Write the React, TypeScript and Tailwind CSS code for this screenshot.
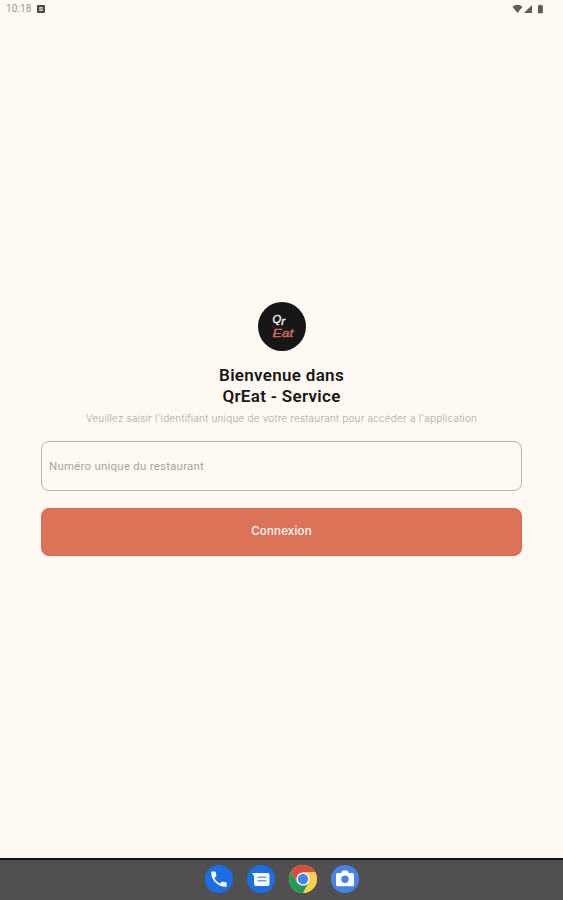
const StatusBar = () => (
  <header className="flex h-[18px] shrink-0 items-center justify-between pl-[6px] pr-[18px]">
    <div className="flex items-center gap-[6px]">
      <span className="font-['Roboto',sans-serif] text-[10px] leading-none tracking-[0.1px] text-[#9b9793]">10:18</span>
      <svg width="8" height="8" viewBox="0 0 8 8">
        <rect width="8" height="8" rx="1" fill="#4b4845" />
        <path d="M2.3 2h3.4v4H2.3z" fill="#d8d3cd" />
        <path d="M3.5 3.2h1.2v1.4H3.5z" fill="#4b4845" />
      </svg>
    </div>
    <svg width="33" height="10" viewBox="0 0 33 10" fill="#5f5c59">
      <path d="M0.5 2.7Q5.5-1 10.5 2.7L5.5 9z" />
      <path d="M12 9 20 1v8z" />
      <path d="M26 1.5h1.3V.7h2.2v.8h1.4V9.3H26z" />
    </svg>
  </header>
);

const Logo = () => (
  <svg width="48" height="49" viewBox="0 0 48 49" className="shrink-0">
    <ellipse cx="24" cy="24.5" rx="24" ry="24.5" fill="#171717" />
    <g fontFamily="Liberation Sans, sans-serif" fontStyle="italic" fontSize="11.5" strokeWidth="0.4">
      <text x="14.5" y="21" fill="#f3f3f3" stroke="#f3f3f3" textLength="12.5" lengthAdjust="spacingAndGlyphs">
        Q<tspan dy="1.5">r</tspan>
      </text>
      <text x="14.5" y="35" fill="#d96a4e" stroke="#d96a4e" textLength="21" lengthAdjust="spacingAndGlyphs">
        Eat
      </text>
    </g>
  </svg>
);

const PhoneIcon = () => (
  <svg width="28" height="28" viewBox="0 0 28 28">
    <circle cx="14" cy="14" r="14" fill="#1a6fe8" />
    <path
      transform="translate(3.6 3.8) scale(.86)"
      fill="#fff"
      d="M6.62 10.79a15.15 15.15 0 0 0 6.59 6.59l2.2-2.2a1 1 0 0 1 1.02-.24 11.4 11.4 0 0 0 3.57.57 1 1 0 0 1 1 1V20a1 1 0 0 1-1 1A17 17 0 0 1 3 4a1 1 0 0 1 1-1h3.5a1 1 0 0 1 1 1c0 1.25.2 2.45.57 3.57a1 1 0 0 1-.25 1.02z"
    />
  </svg>
);

const MessagesIcon = () => (
  <svg width="28" height="28" viewBox="0 0 28 28">
    <circle cx="14" cy="14" r="14" fill="#1a6fe8" />
    <path d="M5 8h15.5a2 2 0 0 1 2 2v9a2 2 0 0 1-2 2H9a2 2 0 0 1-2-2v-8z" fill="#fff" />
    <path d="M10.5 12.3h9M10.5 15.8h9" stroke="#6b9ff0" strokeWidth="1.4" />
  </svg>
);

const ChromeIcon = () => (
  <svg width="28" height="28" viewBox="0 0 28 28">
    <circle cx="14" cy="14" r="14" fill="#fbd04b" />
    <path d="M14 14 8.2 17.3 1.9 7A14 14 0 0 1 26.1 7H14z" fill="#dd4b3e" />
    <path d="M1.9 7 8 17.5 14 20.5 19.6 17.6 14 28A14 14 0 0 1 1.9 7z" fill="#1e9a58" />
    <path d="M14 7h12.1A14 14 0 0 1 14 28l6-10.5z" fill="#fbd04b" />
    <circle cx="14" cy="14" r="6.6" fill="#fff" />
    <circle cx="14" cy="14" r="5.2" fill="#4285f4" />
  </svg>
);

const CameraIcon = () => (
  <svg width="28" height="28" viewBox="0 0 28 28">
    <circle cx="14" cy="14" r="14" fill="#4683e8" />
    <path
      d="M6.5 8h3.6l1.5-2.4h4.8L17.9 8h3.6A1.5 1.5 0 0 1 23 9.5v10.2a1.5 1.5 0 0 1-1.5 1.5h-15A1.5 1.5 0 0 1 5 19.7V9.5A1.5 1.5 0 0 1 6.5 8z"
      fill="#fff"
    />
    <circle cx="14" cy="14.3" r="3.7" fill="#4683e8" />
  </svg>
);

export default function App() {
  return (
    <div className="flex h-[900px] w-full flex-col bg-[#fff9f3]">
      <StatusBar />

      <main className="flex flex-1 flex-col items-center px-[41px] pt-[284px]">
        <Logo />
        <h1 className="mt-[14px] text-center font-['Roboto',sans-serif] text-[17px] font-semibold leading-[21px] tracking-[0.3px] text-[#171615]">
          Bienvenue dans
          <br />
          QrEat - Service
        </h1>
        <p className="mt-[3px] whitespace-nowrap font-['Inter',sans-serif] text-[10px] font-light leading-[17px] tracking-[0.21px] text-[#a9a49f]">
          Veuillez saisir l'identifiant unique de votre restaurant pour accèder a l'application
        </p>
        <input
          type="text"
          placeholder="Numéro unique du restaurant"
          className="mt-[14px] h-[50px] w-full rounded-[8px] border border-[#b5b4b1] bg-transparent px-[7px] font-['Roboto',sans-serif] text-[11.5px] tracking-[0.22px] outline-none placeholder:text-[#a8a49f]"
        />
        <button className="mt-[17px] h-[48px] w-full shrink-0 rounded-[8px] border border-[#d9694b] bg-[#dc7358] font-['Inter',sans-serif] text-[11.5px] font-medium tracking-[0.2px] text-white">
          Connexion
        </button>
      </main>

      <footer className="flex h-[42px] shrink-0 items-center justify-center gap-[14px] border-t-2 border-[#111023] bg-[#505050] pb-[2px]">
        <PhoneIcon />
        <MessagesIcon />
        <ChromeIcon />
        <CameraIcon />
      </footer>
    </div>
  );
}
